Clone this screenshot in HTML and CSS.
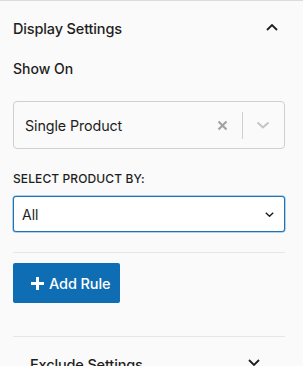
FILE: index.html
```html
<!DOCTYPE html>
<html lang="en">
<head>
<meta charset="utf-8">
<title>Display Settings</title>
<link rel="stylesheet" href="styles.css">
</head>
<body>
<div class="panel">
  <div class="panel-header">
    <span class="panel-title">Display Settings</span>
    <svg class="chev" width="12" height="8" viewBox="0 0 12 8"><path d="M1 7 L6 2 L11 7" fill="none" stroke="#1e1e1e" stroke-width="1.8"/></svg>
  </div>
  <div class="panel-body">
    <div class="label">Show On</div>
    <div class="multi-select">
      <span class="ms-value">Single Product</span>
      <span class="ms-controls">
        <svg class="ms-clear" width="11" height="11" viewBox="0 0 11 11"><path d="M1.5 1.5 L9.5 9.5 M9.5 1.5 L1.5 9.5" stroke="#a3a3a3" stroke-width="2.2" fill="none"/></svg>
        <span class="ms-sep"></span>
        <svg class="ms-arrow" width="14" height="8" viewBox="0 0 14 8"><path d="M1.5 1.5 L7 6.5 L12.5 1.5" fill="none" stroke="#c4c4c4" stroke-width="2"/></svg>
      </span>
    </div>
    <div class="caps-label">SELECT PRODUCT BY:</div>
    <div class="select">
      <span>All</span>
      <svg width="9" height="5" viewBox="0 0 9 5"><path d="M0.8 0.8 L4.5 4.2 L8.2 0.8" fill="none" stroke="#1e1e1e" stroke-width="1.5"/></svg>
    </div>
    <div class="divider first"></div>
    <button class="btn-primary" type="button">
      <svg width="15" height="15" viewBox="0 0 15 15"><path d="M7.5 1 V14 M1 7.5 H14" stroke="#fff" stroke-width="3" fill="none"/></svg>
      <span>Add Rule</span>
    </button>
    <div class="divider second"></div>
    <div class="sub-header">
      <span class="panel-title">Exclude Settings</span>
      <svg class="chev" width="12" height="8" viewBox="0 0 12 8"><path d="M1 1 L6 6 L11 1" fill="none" stroke="#1e1e1e" stroke-width="1.8"/></svg>
    </div>
  </div>
</div>
</body>
</html>
```
FILE: styles.css
```css
html, body {
  margin: 0;
  padding: 0;
  background: #fafafa;
}
body {
  font-family: Inter, "Noto Sans", "Liberation Sans", sans-serif;
  color: #1e1e1e;
  -webkit-font-smoothing: antialiased;
}
.panel {
  border-top: 1px solid #dcdcdc;
}
.panel-header {
  height: 55px;
  display: flex;
  align-items: center;
  justify-content: space-between;
  padding: 0 25px 0 13px;
}
.panel-title {
  font-size: 14.5px;
  font-weight: 500;
  letter-spacing: -0.15px;
}
.chev {
  display: block;
  margin-top: -3px;
}
.panel-body {
  padding: 0 18px 0 13px;
}
.label {
  font-size: 14px;
  font-weight: 500;
  line-height: 21px;
  margin-top: 2px;
}
.multi-select {
  margin-top: 22px;
  height: 46px;
  border: 1px solid #cfcfcf;
  border-radius: 4px;
  background: #fafafa;
  display: flex;
  align-items: center;
  justify-content: space-between;
  padding: 0 14px 0 11px;
}
.ms-value {
  font-size: 14.3px;
  letter-spacing: -0.1px;
  color: #1e1e1e;
}
.ms-controls {
  display: flex;
  align-items: center;
}
.ms-clear {
  display: block;
}
.ms-sep {
  width: 1px;
  height: 27px;
  background: #cfcfcf;
  margin: 0 13px 0 14px;
}
.ms-arrow {
  display: block;
}
.caps-label {
  margin-top: 21px;
  font-size: 12px;
  font-weight: 500;
  line-height: 17px;
  letter-spacing: 0.1px;
}
.select {
  margin-top: 9px;
  height: 34px;
  border: 1px solid #2271b1;
  border-radius: 3px;
  box-shadow: 0 0 0 0.5px #5fa3db;
  background: #fff;
  display: flex;
  align-items: center;
  justify-content: space-between;
  padding: 0 10px 0 8px;
  font-size: 14px;
}
.select svg {
  display: block;
}
.divider {
  height: 1px;
  background: #e6e6e6;
}
.divider.first {
  margin-top: 20px;
}
.divider.second {
  margin-top: 33px;
}
.btn-primary {
  margin-top: 10px;
  height: 40px;
  width: 107px;
  border: none;
  border-radius: 2px;
  background: #0f6db3;
  color: #fff;
  display: flex;
  align-items: center;
  justify-content: flex-start;
  gap: 4px;
  padding: 0 0 0 17px;
  font-family: inherit;
  font-size: 14.5px;
  font-weight: 500;
  letter-spacing: -0.1px;
}
.btn-primary svg {
  display: block;
}
.sub-header {
  display: flex;
  align-items: center;
  justify-content: space-between;
  padding: 0 25px 0 17px;
  height: 55px;
}
```
